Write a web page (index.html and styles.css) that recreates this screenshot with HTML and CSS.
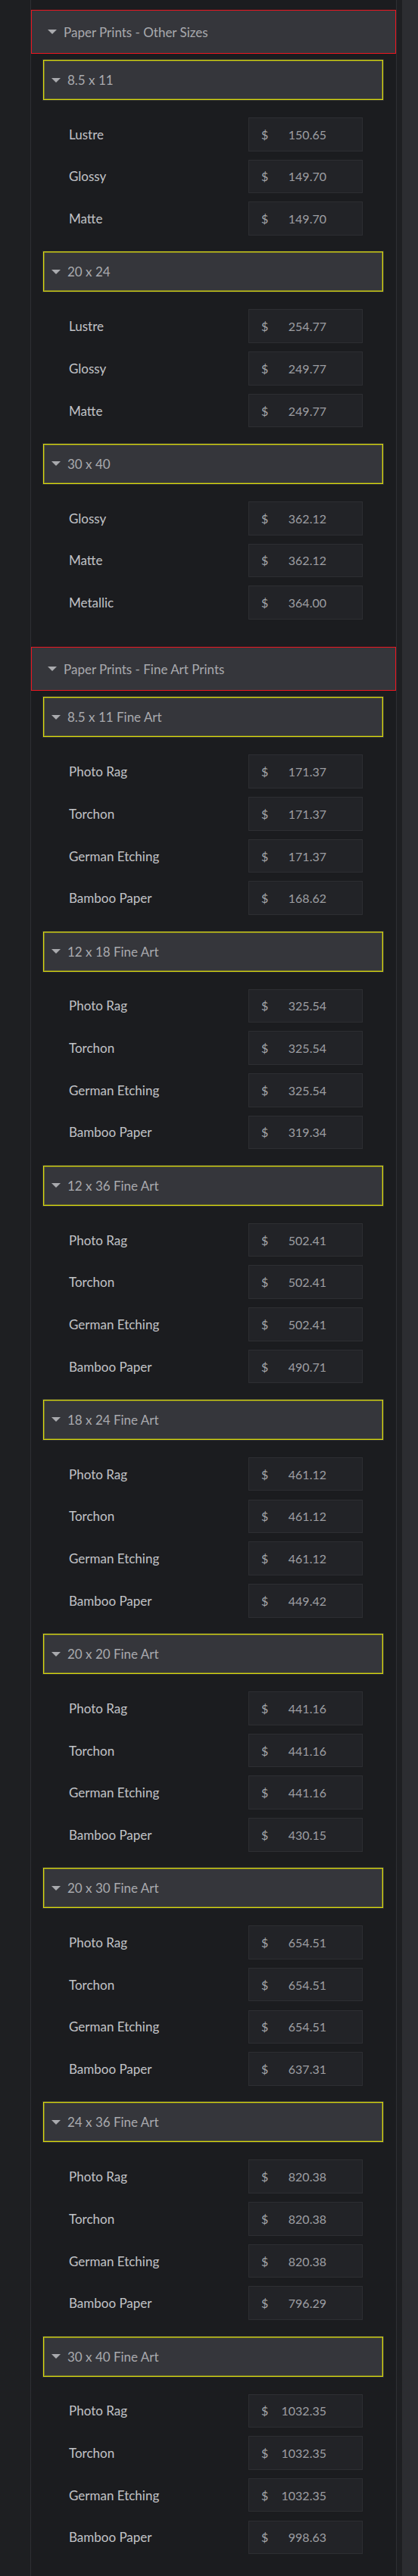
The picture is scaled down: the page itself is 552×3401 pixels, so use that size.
FILE: index.html
```html
<!DOCTYPE html>
<html lang="en">
<head>
<meta charset="utf-8">
<title>Print Prices</title>
<link rel="stylesheet" href="styles.css">
</head>
<body>
<div class="app">
  <div class="gutter"></div>
  <main class="panel">
    <section class="section">
      <div class="section-head"><span class="caret"></span>Paper Prints - Other Sizes</div>
      <div class="group">
        <div class="group-head"><span class="caret"></span>8.5 x 11</div>
        <div class="rows">
          <div class="row"><span class="label">Lustre</span><div class="price"><span class="cur">$</span><span class="val">150.65</span></div></div>
          <div class="row"><span class="label">Glossy</span><div class="price"><span class="cur">$</span><span class="val">149.70</span></div></div>
          <div class="row"><span class="label">Matte</span><div class="price"><span class="cur">$</span><span class="val">149.70</span></div></div>
        </div>
      </div>
      <div class="group">
        <div class="group-head"><span class="caret"></span>20 x 24</div>
        <div class="rows">
          <div class="row"><span class="label">Lustre</span><div class="price"><span class="cur">$</span><span class="val">254.77</span></div></div>
          <div class="row"><span class="label">Glossy</span><div class="price"><span class="cur">$</span><span class="val">249.77</span></div></div>
          <div class="row"><span class="label">Matte</span><div class="price"><span class="cur">$</span><span class="val">249.77</span></div></div>
        </div>
      </div>
      <div class="group">
        <div class="group-head"><span class="caret"></span>30 x 40</div>
        <div class="rows">
          <div class="row"><span class="label">Glossy</span><div class="price"><span class="cur">$</span><span class="val">362.12</span></div></div>
          <div class="row"><span class="label">Matte</span><div class="price"><span class="cur">$</span><span class="val">362.12</span></div></div>
          <div class="row"><span class="label">Metallic</span><div class="price"><span class="cur">$</span><span class="val">364.00</span></div></div>
        </div>
      </div>
    </section>

    <section class="section">
      <div class="section-head"><span class="caret"></span>Paper Prints - Fine Art Prints</div>
      <div class="group">
        <div class="group-head"><span class="caret"></span>8.5 x 11 Fine Art</div>
        <div class="rows">
          <div class="row"><span class="label">Photo Rag</span><div class="price"><span class="cur">$</span><span class="val">171.37</span></div></div>
          <div class="row"><span class="label">Torchon</span><div class="price"><span class="cur">$</span><span class="val">171.37</span></div></div>
          <div class="row"><span class="label">German Etching</span><div class="price"><span class="cur">$</span><span class="val">171.37</span></div></div>
          <div class="row"><span class="label">Bamboo Paper</span><div class="price"><span class="cur">$</span><span class="val">168.62</span></div></div>
        </div>
      </div>
      <div class="group">
        <div class="group-head"><span class="caret"></span>12 x 18 Fine Art</div>
        <div class="rows">
          <div class="row"><span class="label">Photo Rag</span><div class="price"><span class="cur">$</span><span class="val">325.54</span></div></div>
          <div class="row"><span class="label">Torchon</span><div class="price"><span class="cur">$</span><span class="val">325.54</span></div></div>
          <div class="row"><span class="label">German Etching</span><div class="price"><span class="cur">$</span><span class="val">325.54</span></div></div>
          <div class="row"><span class="label">Bamboo Paper</span><div class="price"><span class="cur">$</span><span class="val">319.34</span></div></div>
        </div>
      </div>
      <div class="group">
        <div class="group-head"><span class="caret"></span>12 x 36 Fine Art</div>
        <div class="rows">
          <div class="row"><span class="label">Photo Rag</span><div class="price"><span class="cur">$</span><span class="val">502.41</span></div></div>
          <div class="row"><span class="label">Torchon</span><div class="price"><span class="cur">$</span><span class="val">502.41</span></div></div>
          <div class="row"><span class="label">German Etching</span><div class="price"><span class="cur">$</span><span class="val">502.41</span></div></div>
          <div class="row"><span class="label">Bamboo Paper</span><div class="price"><span class="cur">$</span><span class="val">490.71</span></div></div>
        </div>
      </div>
      <div class="group">
        <div class="group-head"><span class="caret"></span>18 x 24 Fine Art</div>
        <div class="rows">
          <div class="row"><span class="label">Photo Rag</span><div class="price"><span class="cur">$</span><span class="val">461.12</span></div></div>
          <div class="row"><span class="label">Torchon</span><div class="price"><span class="cur">$</span><span class="val">461.12</span></div></div>
          <div class="row"><span class="label">German Etching</span><div class="price"><span class="cur">$</span><span class="val">461.12</span></div></div>
          <div class="row"><span class="label">Bamboo Paper</span><div class="price"><span class="cur">$</span><span class="val">449.42</span></div></div>
        </div>
      </div>
      <div class="group">
        <div class="group-head"><span class="caret"></span>20 x 20 Fine Art</div>
        <div class="rows">
          <div class="row"><span class="label">Photo Rag</span><div class="price"><span class="cur">$</span><span class="val">441.16</span></div></div>
          <div class="row"><span class="label">Torchon</span><div class="price"><span class="cur">$</span><span class="val">441.16</span></div></div>
          <div class="row"><span class="label">German Etching</span><div class="price"><span class="cur">$</span><span class="val">441.16</span></div></div>
          <div class="row"><span class="label">Bamboo Paper</span><div class="price"><span class="cur">$</span><span class="val">430.15</span></div></div>
        </div>
      </div>
      <div class="group">
        <div class="group-head"><span class="caret"></span>20 x 30 Fine Art</div>
        <div class="rows">
          <div class="row"><span class="label">Photo Rag</span><div class="price"><span class="cur">$</span><span class="val">654.51</span></div></div>
          <div class="row"><span class="label">Torchon</span><div class="price"><span class="cur">$</span><span class="val">654.51</span></div></div>
          <div class="row"><span class="label">German Etching</span><div class="price"><span class="cur">$</span><span class="val">654.51</span></div></div>
          <div class="row"><span class="label">Bamboo Paper</span><div class="price"><span class="cur">$</span><span class="val">637.31</span></div></div>
        </div>
      </div>
      <div class="group">
        <div class="group-head"><span class="caret"></span>24 x 36 Fine Art</div>
        <div class="rows">
          <div class="row"><span class="label">Photo Rag</span><div class="price"><span class="cur">$</span><span class="val">820.38</span></div></div>
          <div class="row"><span class="label">Torchon</span><div class="price"><span class="cur">$</span><span class="val">820.38</span></div></div>
          <div class="row"><span class="label">German Etching</span><div class="price"><span class="cur">$</span><span class="val">820.38</span></div></div>
          <div class="row"><span class="label">Bamboo Paper</span><div class="price"><span class="cur">$</span><span class="val">796.29</span></div></div>
        </div>
      </div>
      <div class="group">
        <div class="group-head"><span class="caret"></span>30 x 40 Fine Art</div>
        <div class="rows">
          <div class="row"><span class="label">Photo Rag</span><div class="price"><span class="cur">$</span><span class="val">1032.35</span></div></div>
          <div class="row"><span class="label">Torchon</span><div class="price"><span class="cur">$</span><span class="val">1032.35</span></div></div>
          <div class="row"><span class="label">German Etching</span><div class="price"><span class="cur">$</span><span class="val">1032.35</span></div></div>
          <div class="row"><span class="label">Bamboo Paper</span><div class="price"><span class="cur">$</span><span class="val">998.63</span></div></div>
        </div>
      </div>
    </section>
  </main>
  <div class="strip"></div>
  <div class="track"></div>
</div>
</body>
</html>
```
FILE: styles.css
```css
html, body {
  margin: 0;
  padding: 0;
  background: #1e1f22;
}

body {
  font-family: Lato, "Liberation Sans", sans-serif;
  color: #c2c3c7;
}

.app {
  display: flex;
  min-height: 3401px;
  align-items: stretch;
}

.gutter {
  flex: 0 0 40px;
}

.panel {
  flex: 0 0 484px;
  box-sizing: border-box;
  background: #1b1c1f;
  border-left: 1px solid #2e2f33;
  border-right: 1px solid #2e2f33;
  padding: 13px 0 5px;
}

.strip {
  flex: 0 0 7px;
  background: #1e1f22;
}

.track {
  flex: 1 1 auto;
  background: #2c2d31;
}

.section + .section {
  margin-top: 15px;
}

.section-head {
  box-sizing: border-box;
  height: 58px;
  display: flex;
  align-items: center;
  padding-left: 21px;
  background: #35363b;
  border: 1px solid #ec1620;
  color: #a9aaae;
  font-size: 17px;
  margin-bottom: 8px;
}

.caret {
  width: 0;
  height: 0;
  border-left: 6px solid transparent;
  border-right: 6px solid transparent;
  border-top: 6px solid #a9aaae;
  margin-right: 9px;
  flex: none;
}

.group-head {
  box-sizing: border-box;
  height: 53px;
  margin: 0 17px 0 16px;
  display: flex;
  align-items: center;
  padding-left: 10px;
  background: #35363b;
  border: 1px solid #dcdc0c;
  box-shadow: inset 0 0 0 1px rgba(210, 210, 20, 0.35), 0 0 0 1px #2f3035;
  color: #a9aaae;
  font-size: 17px;
}

.rows {
  display: flex;
  flex-direction: column;
  gap: 11.1px;
  padding: 23px 44px 21.5px 50px;
}

.row {
  display: flex;
  align-items: center;
  justify-content: space-between;
  height: 44.6px;
}

.label {
  font-size: 17px;
  color: #c2c3c7;
}

.price {
  box-sizing: border-box;
  width: 151px;
  height: 44.6px;
  display: flex;
  align-items: center;
  padding: 0 47px 0 16px;
  background: #222327;
  border: 1px solid #2d2e32;
  font-size: 16px;
}

.cur {
  color: #a6a7ab;
}

.val {
  flex: 1;
  text-align: right;
  color: #9d9ea2;
}
```
